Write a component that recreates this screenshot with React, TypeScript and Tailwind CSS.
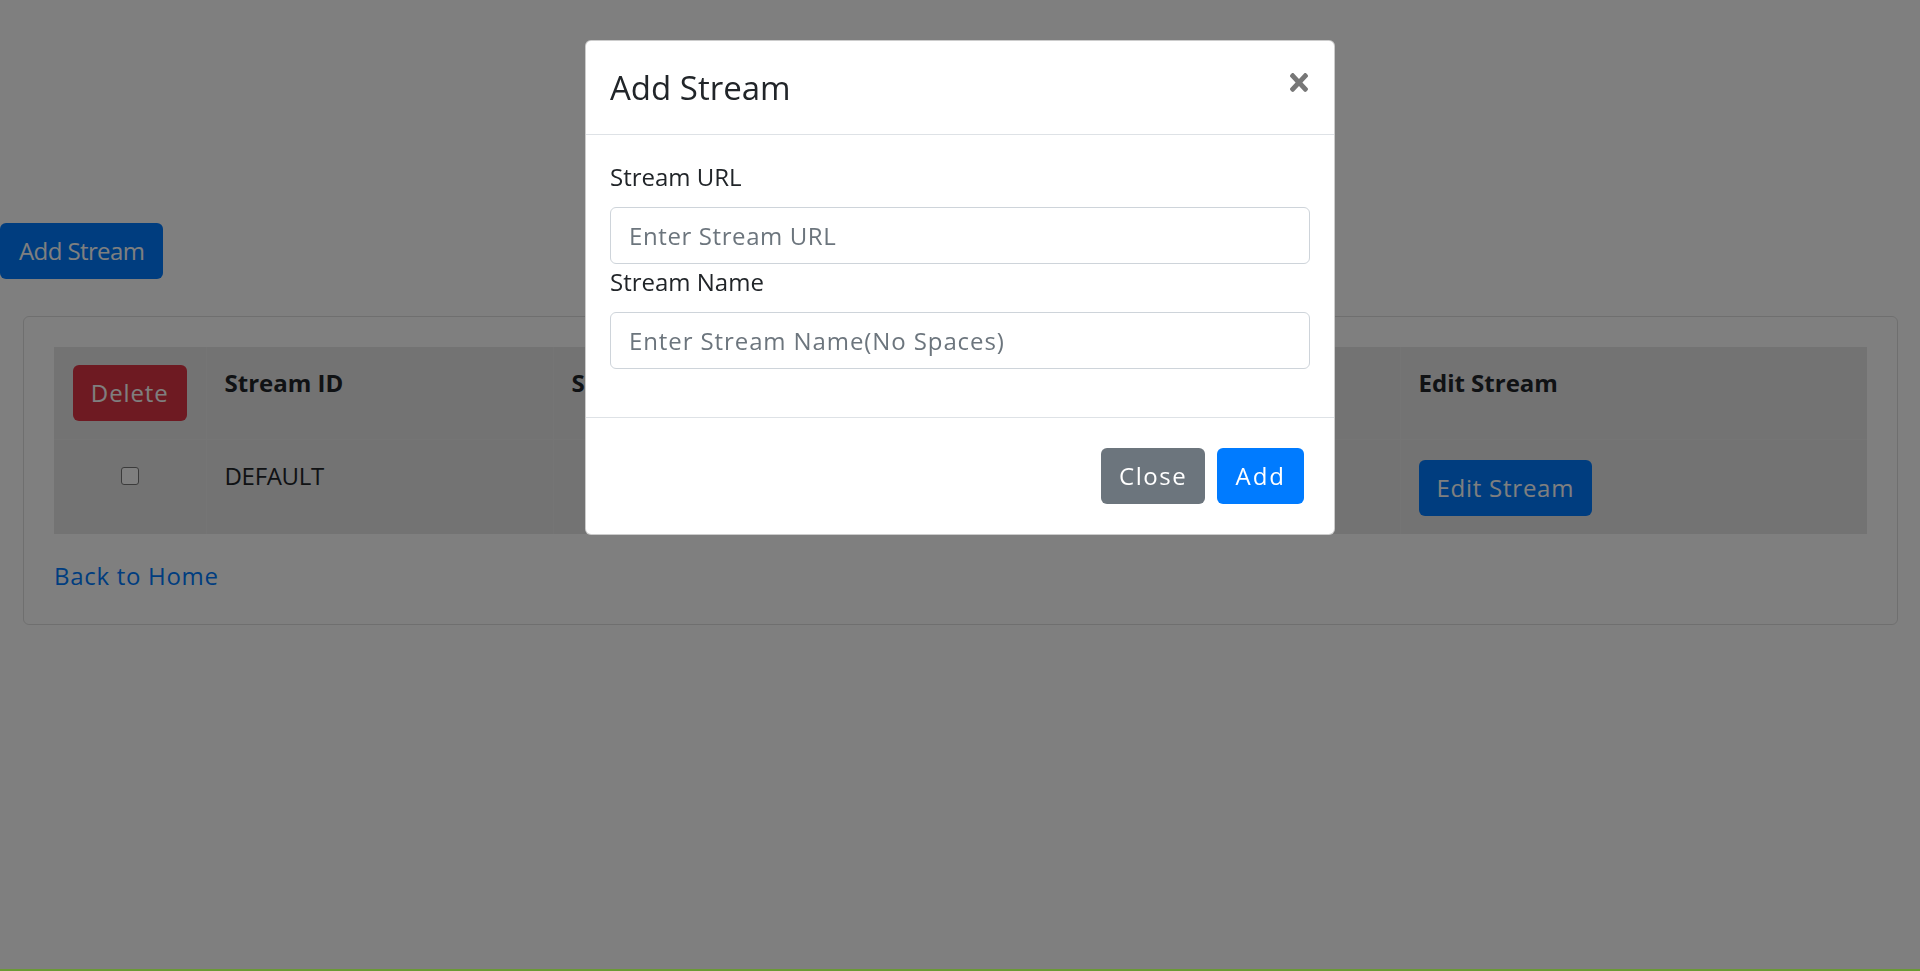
import React from "react";

const streams = [{ id: "DEFAULT", url: "" }];

function CloseIcon() {
  return (
    <svg width="18" height="19" viewBox="0 80 352 352" preserveAspectRatio="none" fill="currentColor">
      <path d="M242.72 256l100.07-100.07c12.28-12.28 12.28-32.19 0-44.48l-22.24-22.24c-12.28-12.28-32.19-12.28-44.48 0L176 189.28 75.93 89.21c-12.28-12.28-32.19-12.28-44.48 0L9.21 111.45c-12.28 12.28-12.28 32.19 0 44.48L109.28 256 9.21 356.07c-12.28 12.28-12.28 32.19 0 44.48l22.24 22.24c12.28 12.28 32.2 12.28 44.48 0L176 322.72l100.07 100.07c12.28 12.28 32.2 12.28 44.48 0l22.24-22.24c12.28-12.28 12.28-32.19 0-44.48L242.72 256z" />
    </svg>
  );
}

const AddStreamModal = () => {
  return (
    <div className="fixed top-[40px] left-1/2 -translate-x-1/2 w-[750px] bg-white border border-black/20 rounded-[6px] z-20">
      <div className="flex items-start justify-between p-[24px] border-b border-[#dee2e6]">
        <h5 className="text-[33px] leading-[45px] font-medium text-[#212529]">Add Stream</h5>
        <button className="mt-[8px] mr-[2px] text-[#777777]">
          <CloseIcon />
        </button>
      </div>
      <div className="p-[24px]">
        <div className="mb-[24px]">
          <label className="block mb-[12px]">Stream URL</label>
          <input
            type="text"
            placeholder="Enter Stream URL"
            className="block w-full h-[57px] px-[18px] border border-[#ced4da] rounded-[6px] text-[24px] tracking-[0.6px] placeholder:text-[#6c757d] outline-none"
          />
          <label className="block mb-[12px]">Stream Name</label>
          <input
            type="text"
            placeholder="Enter Stream Name(No Spaces)"
            className="block w-full h-[57px] px-[18px] border border-[#ced4da] rounded-[6px] text-[24px] tracking-[0.9px] placeholder:text-[#6c757d] outline-none"
          />
        </div>
      </div>
      <div className="flex justify-end gap-[12px] p-[30px] border-t border-[#dee2e6]">
        <button className="h-[56px] px-[18px] rounded-[6px] bg-[#6c757d] text-white tracking-[1.6px]">Close</button>
        <button className="h-[56px] px-[18px] rounded-[6px] bg-[#007bff] text-white tracking-[2px]">Add</button>
      </div>
    </div>
  );
};

export default function App() {
  return (
    <div className="min-h-screen bg-white font-['Open_Sans',sans-serif] text-[24px] leading-[36px] text-[#212529]">
      <div className="pt-[223px]">
        <button className="h-[56px] px-[19px] rounded-[6px] bg-[#007bff] text-white tracking-[-0.6px]">Add Stream</button>
      </div>
      <div className="ml-[23px] mr-[22px] mt-[37px] border border-[#dfdfdf] rounded-[6px] p-[30px]">
        <table className="w-full table-fixed bg-[#e6e6e6] mb-[24px]">
          <colgroup>
            <col className="w-[152px]" />
            <col className="w-[347px]" />
            <col className="w-[847px]" />
            <col />
          </colgroup>
          <tbody>
            <tr>
              <th className="p-[18px] align-top text-center">
                <button className="h-[56px] px-[18px] rounded-[6px] bg-[#dc3545] text-white font-normal tracking-[0.9px]">Delete</button>
              </th>
              <th className="p-[18px] align-top text-left font-bold border-l border-[#ebebeb]">Stream ID</th>
              <th className="p-[18px] align-top text-left font-bold border-l border-[#ebebeb]">Stream URL</th>
              <th className="p-[18px] align-top text-left font-bold border-l border-[#ebebeb]">Edit Stream</th>
            </tr>
            {streams.map((s) => (
              <tr key={s.id} className="border-t border-[#ebebeb]">
                <td className="p-[18px] align-top text-center">
                  <input
                    type="checkbox"
                    className="appearance-none w-[18px] h-[18px] mt-[9px] bg-white border-[1.5px] border-[#767676] rounded-[3px]"
                  />
                </td>
                <td className="p-[18px] align-top border-l border-[#ebebeb] tracking-[-0.3px]">{s.id}</td>
                <td className="p-[18px] align-top border-l border-[#ebebeb]">{s.url}</td>
                <td className="p-[18px] align-top border-l border-[#ebebeb]">
                  <button className="h-[56px] px-[18px] mt-[2px] rounded-[6px] bg-[#007bff] text-white tracking-[0.75px]">Edit Stream</button>
                </td>
              </tr>
            ))}
          </tbody>
        </table>
        <a href="#" className="text-[#007bff] tracking-[0.7px]">Back to Home</a>
      </div>

      <div className="fixed inset-0 bg-black/50 z-10" />
      <AddStreamModal />
      <div className="fixed bottom-0 left-0 right-0 h-[2px] bg-[#6a9a34] z-30" />
    </div>
  );
}
